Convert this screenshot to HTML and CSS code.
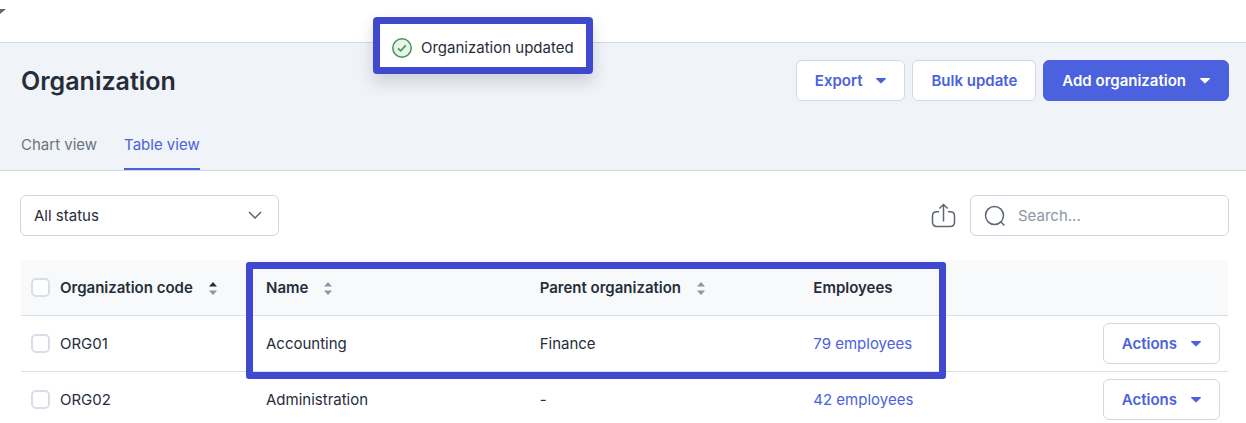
FILE: index.html
```html
<!DOCTYPE html>
<html lang="en">
<head>
    <meta charset="UTF-8">
    <meta name="viewport" content="width=device-width, initial-scale=1.0">
    <title>Organization</title>
    <link rel="stylesheet" href="styles.css">
</head>
<body>
    <!-- shared icons -->
    <svg class="sprite" aria-hidden="true">
        <symbol id="caret" viewBox="0 0 10 6"><path d="M.6 0h8.8c.5 0 .8.6.4 1L5.6 5.1c-.3.4-.9.4-1.2 0L.2 1C-.2.6.1 0 .6 0z" fill="currentColor"/></symbol>
        <symbol id="sort" viewBox="0 0 8 13">
            <path class="up" d="M4 0l4 4.500H0z" fill="currentColor"/>
            <path d="M4 13L0 8.500h8z" fill="#8c95a9"/>
        </symbol>
    </svg>

    <div class="topbar">
        <svg class="topbar-caret" width="6" height="6" viewBox="0 0 6 6"><path d="M0 0h6L0 5z" fill="#5c6675"/></svg>
    </div>

    <div class="toast" role="status">
        <svg width="20" height="20" viewBox="0 0 20 20" fill="none" stroke="#3f9653">
            <circle cx="10" cy="10" r="9.200" fill="#e8f4ea" stroke-width="1.500"/>
            <path d="M6 10.400l2.700 2.400 5.100-5.400" stroke-width="1.600"/>
        </svg>
        <span>Organization updated</span>
    </div>

    <header class="page-header">
        <div class="title-row">
            <h1>Organization</h1>
            <div class="header-actions">
                <button class="btn" type="button">Export <svg class="caret"><use href="#caret"/></svg></button>
                <button class="btn" type="button">Bulk update</button>
                <button class="btn btn-primary" type="button">Add organization <svg class="caret"><use href="#caret"/></svg></button>
            </div>
        </div>
        <nav class="tabs">
            <a href="#chart">Chart view</a>
            <a href="#table" class="active">Table view</a>
        </nav>
    </header>

    <main>
        <div class="toolbar">
            <div class="select-wrap">
                <select aria-label="Status">
                    <option>All status</option>
                    <option>Active</option>
                    <option>Inactive</option>
                </select>
                <svg width="14" height="8" viewBox="0 0 14 8" fill="none" stroke="#5c6675" stroke-width="1.500"><path d="M1 1l6 6 6-6"/></svg>
            </div>
            <div class="tools">
                <button class="icon-btn" type="button" aria-label="Share">
                    <svg width="25" height="25" viewBox="0 0 25 25" fill="none" stroke="#5c6675" stroke-width="1.500">
                        <path d="M8 8.800H5.800C3 8.800 1.500 10.500 1.500 13v6c0 3 1.500 4.500 4.500 4.500h13c3 0 4.500-1.500 4.500-4.500v-6c0-2.500-1.500-4.200-4.300-4.200H17M12.500 18.500V1.800M8.300 5.500l4.200-4 4.200 4"/>
                    </svg>
                </button>
                <label class="search">
                    <svg width="22" height="22" viewBox="0 0 22 22" fill="none" stroke="#5c6675" stroke-width="1.500"><circle cx="10.500" cy="10.500" r="9"/><path d="M17 17l3.500 3.500"/></svg>
                    <input type="search" placeholder="Search..." aria-label="Search">
                </label>
            </div>
        </div>

        <div class="table-wrap">
            <table>
                <colgroup>
                    <col class="col-check">
                    <col class="col-code">
                    <col><col><col>
                    <col class="col-actions">
                </colgroup>
                <thead>
                    <tr>
                        <th><input type="checkbox" aria-label="Select all"></th>
                        <th>Organization code <svg class="sort sorted"><use href="#sort"/></svg></th>
                        <th>Name <svg class="sort"><use href="#sort"/></svg></th>
                        <th>Parent organization <svg class="sort"><use href="#sort"/></svg></th>
                        <th>Employees</th>
                        <th></th>
                    </tr>
                </thead>
                <tbody>
                    <tr>
                        <td><input type="checkbox" aria-label="Select ORG01"></td>
                        <td>ORG01</td>
                        <td>Accounting</td>
                        <td>Finance</td>
                        <td><a href="#org01">79 employees</a></td>
                        <td class="actions"><button class="btn" type="button">Actions <svg class="caret"><use href="#caret"/></svg></button></td>
                    </tr>
                    <tr>
                        <td><input type="checkbox" aria-label="Select ORG02"></td>
                        <td>ORG02</td>
                        <td>Administration</td>
                        <td>-</td>
                        <td><a href="#org02">42 employees</a></td>
                        <td class="actions"><button class="btn" type="button">Actions <svg class="caret"><use href="#caret"/></svg></button></td>
                    </tr>
                </tbody>
            </table>
            <div class="highlight"></div>
        </div>
    </main>
</body>
</html>
```
FILE: styles.css
```css
* {
    box-sizing: border-box;
}
body {
    margin: 0;
    font-family: Inter, "Liberation Sans", sans-serif;
    font-size: 15px;
    line-height: 20px;
    color: #262d3a;
    background: #fff;
}
svg {
    flex: none;
}
a {
    color: #4b61dd;
    text-decoration: none;
}
.sprite {
    position: absolute;
    width: 0;
    height: 0;
}
.topbar {
    height: 43px;
    padding-top: 9px;
    border-bottom: 1px solid #d3d9e3;
}
.topbar-caret {
    display: block;
}

/* toast */
.toast {
    position: absolute;
    top: 17px;
    left: 373px;
    display: flex;
    align-items: center;
    gap: 9px;
    height: 57px;
    padding: 4px 12px 0;
    background: #fff;
    border: 7px solid #4048cd;
    border-radius: 4px;
    box-shadow: 0 8px 16px rgba(60, 70, 80, 0.2);
    white-space: nowrap;
}

/* header */
.page-header {
    padding: 17px 17px 0 21px;
    background: #f0f3f8;
    border-bottom: 1px solid #cfd6e1;
}
.title-row {
    display: flex;
    align-items: center;
    justify-content: space-between;
}
h1 {
    margin: 0;
    font-size: 25px;
    line-height: 32px;
    font-weight: 600;
}
.header-actions {
    display: flex;
    gap: 7px;
}
.btn {
    display: inline-flex;
    align-items: center;
    gap: 14px;
    height: 41px;
    padding: 0 18px;
    font: 600 15px/20px Inter, "Liberation Sans", sans-serif;
    color: #4b61dd;
    background: #fff;
    border: 1px solid #d3d9e3;
    border-radius: 6px;
    cursor: pointer;
}
.btn-primary {
    color: #fff;
    background: #4b61dd;
    border-color: #4b61dd;
}
.caret {
    width: 10px;
    height: 6px;
}
.tabs {
    display: flex;
    gap: 27px;
    margin-top: 23px;
}
.tabs a {
    padding: 11px 0 13px;
    color: #6a7383;
    border-bottom: 2px solid transparent;
}
.tabs .active {
    color: #4b61dd;
    border-color: #4b61dd;
}

/* filters */
main {
    padding: 24px 17px 0 20px;
}
.toolbar {
    display: flex;
    justify-content: space-between;
}
.select-wrap {
    position: relative;
    width: 259px;
}
.select-wrap svg {
    position: absolute;
    top: 16px;
    right: 17px;
    pointer-events: none;
}
select {
    width: 100%;
    height: 41px;
    padding: 0 13px;
    font: inherit;
    color: inherit;
    background: #fff;
    border: 1px solid #cfd6e1;
    border-radius: 6px;
    appearance: none;
}
.tools {
    display: flex;
    align-items: center;
    gap: 14px;
}
.icon-btn {
    padding: 0;
    background: none;
    border: none;
    cursor: pointer;
}
.icon-btn svg {
    display: block;
}
.search {
    display: flex;
    align-items: center;
    gap: 12px;
    width: 259px;
    height: 41px;
    padding: 0 13px;
    border: 1px solid #cfd6e1;
    border-radius: 6px;
}
.search input {
    flex: 1;
    min-width: 0;
    padding: 0;
    font: inherit;
    color: inherit;
    background: none;
    border: none;
    outline: none;
}
.search input::placeholder {
    color: #8c95a6;
}

/* table */
.table-wrap {
    position: relative;
    margin: 24px 1px 0;
}
table {
    width: 100%;
    table-layout: fixed;
    border-collapse: separate;
    border-spacing: 0;
}
.col-check {
    width: 39px;
}
.col-code {
    width: 206px;
}
.col-actions {
    width: 141px;
}
th,
td {
    height: 56px;
    padding: 0;
    text-align: left;
    white-space: nowrap;
    border-bottom: 1px solid #d9dee7;
}
th {
    font-weight: 600;
    background: #f8f9fb;
}
.actions {
    padding-right: 8px;
    text-align: right;
}
.actions .btn {
    vertical-align: middle;
}
.sort {
    width: 8px;
    height: 13px;
    margin-left: 12px;
    vertical-align: -2px;
    color: #8c95a9;
}
.sorted {
    color: #262d3a;
}
input[type="checkbox"] {
    display: block;
    width: 19px;
    height: 19px;
    margin: 0 0 0 10px;
    background: #fff;
    border: 2px solid #d8dee7;
    border-radius: 5px;
    appearance: none;
}
input[type="checkbox"]:checked {
    background: #4b61dd;
    border-color: #4b61dd;
}

/* frame around name, parent and employees */
.highlight {
    position: absolute;
    top: 2px;
    left: 225px;
    right: 282px;
    height: 117px;
    border: 7px solid #4048cd;
    border-radius: 3px;
    pointer-events: none;
}
```
